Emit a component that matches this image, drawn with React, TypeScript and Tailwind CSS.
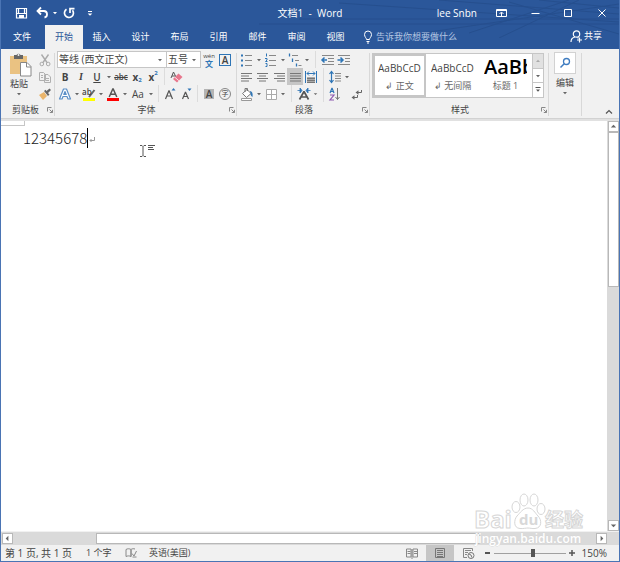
import React from 'react';

const UI_FONT = "font-['Open_Sans','Noto_Sans_CJK_SC',sans-serif]";

interface IconProps {
  children: React.ReactNode;
  className?: string;
}

const Icon: React.FC<IconProps> = ({ children, className = 'w-4 h-4' }) => (
  <svg viewBox="0 0 16 16" fill="none" className={`shrink-0 ${className}`} aria-hidden="true">
    {children}
  </svg>
);

const Tool: React.FC<{ label: string; active?: boolean; children: React.ReactNode }> = ({
  label,
  active,
  children
}) => (
  <button
    type="button"
    aria-label={label}
    className={`w-4 h-[17px] shrink-0 flex items-center justify-center text-[#444] ${active ? 'bg-[#c6c6c6]' : ''}`}
  >
    {children}
  </button>
);

const Caret = ({ className = 'w-2' }: { className?: string }) => (
  <svg viewBox="0 0 8 4" className={`h-1 shrink-0 ${className}`} aria-hidden="true">
    <path d="M2 1h4L4 3.2z" fill="#666" />
  </svg>
);

const Split = ({ className = 'w-[7px]' }: { className?: string }) => (
  <div className={`h-[17px] shrink-0 flex justify-center ${className}`}>
    <div className="w-px bg-[#dcdcdc]" />
  </div>
);

const Divider = () => <div className="w-px shrink-0 bg-[#d8d8d8] my-0.5" />;

const Launcher = ({ label }: { label: string }) => (
  <button type="button" aria-label={label} className="w-2 h-2 shrink-0">
    <svg viewBox="0 0 8 8" fill="none" className="w-2 h-2">
      <path d="M1.5 5.5v-4h4M3.5 3.5l3 3M6.5 3.8v2.7H3.8" stroke="#888" />
    </svg>
  </button>
);

const GroupLabel = ({ text }: { text: string }) => (
  <div className="h-4 flex items-center text-[9px] leading-4 text-[#444]">
    <span className="w-2 shrink-0" />
    <span className="flex-1 text-center">{text}</span>
    <Launcher label={text} />
  </div>
);

const Lines = ({ widths, x = [2, 2, 2, 2] }: { widths: number[]; x?: number[] }) => (
  <Icon>
    {widths.map((w, i) => (
      <path key={i} d={`M${x[i]} ${4.5 + i * 2.5}h${w}`} stroke="#777" />
    ))}
  </Icon>
);

const tabs = ['文件', '开始', '插入', '设计', '布局', '引用', '邮件', '审阅', '视图'];

const streaks = [
  'M100 3L380 22',
  'M60 19h320',
  'M150 38L380 4',
  'M200 0L380 14',
  'M20 24h360',
  'M260 38L340 0',
  'M230 33L330 0',
  'M270 2L380 34',
  'M300 0L380 8'
];

const TitleBar = () => (
  <div className="h-[25px] flex items-center text-white">
    <div className="flex-1 flex items-center">
      <button type="button" aria-label="保存" className="ml-3">
        <Icon>
          <path d="M3.5 3.5h10v9.5h-10zM3.5 8.5h10M5.5 3.5v4.5M11.5 3.5v4.5" stroke="#fff" strokeWidth="1.2" />
          <path d="M6 10h5v3H6z" fill="#fff" />
        </Icon>
      </button>
      <button type="button" aria-label="撤消" className="ml-[5px]">
        <Icon>
          <path d="M7 2.500L3.500 6 7 9.500M4 6h6a3.300 3.300 0 0 1 .5 6.500" stroke="#fff" strokeWidth="1.8" />
        </Icon>
      </button>
      <svg viewBox="0 0 8 4" className="w-2 h-1 ml-px">
        <path d="M2 1h4L4 3.2z" fill="#fff" />
      </svg>
      <button type="button" aria-label="重复" className="ml-0.5">
        <Icon>
          <path d="M5.500 4.200a4.500 4.500 0 1 0 6 1M9 8V3.700h4.500" stroke="#fff" strokeWidth="1.7" />
        </Icon>
      </button>
      <button type="button" aria-label="自定义快速访问工具栏" className="ml-[5px]">
        <Icon>
          <path d="M6 6.5h4" stroke="#fff" />
          <path d="M5.7 8.5h4.6L8 10.8z" fill="#fff" />
        </Icon>
      </button>
    </div>
    <h1 className="text-[10px] leading-4 whitespace-pre">文档1  -  Word</h1>
    <div className="flex-1 flex items-center justify-end">
      <span className="text-[10px] leading-4 mr-4">lee Snbn</span>
      <button type="button" aria-label="功能区显示选项" className="mr-[18px]">
        <Icon>
          <path d="M3.5 4.5h10v7h-10zM3.5 5.5h10" stroke="#fff" />
          <path d="M8.5 11V7.5M6.5 9l2-2 2 2" stroke="#fff" />
        </Icon>
      </button>
      <button type="button" aria-label="最小化" className="mr-[17px]">
        <Icon>
          <path d="M4.5 8.5h8" stroke="#fff" />
        </Icon>
      </button>
      <button type="button" aria-label="最大化" className="mr-[18px]">
        <Icon>
          <path d="M4.5 4.5h7v7h-7z" stroke="#fff" />
        </Icon>
      </button>
      <button type="button" aria-label="关闭" className="mr-[9px]">
        <Icon>
          <path d="M4.5 4.5l7 7M11.5 4.5l-7 7" stroke="#fff" />
        </Icon>
      </button>
    </div>
  </div>
);

const TabBar = () => (
  <nav className="h-6 flex text-[9px] leading-4 text-white">
    {tabs.map((tab, i) => (
      <button
        key={tab}
        type="button"
        className={`${i === 0 ? 'w-11 pr-0.5' : i === 1 ? 'w-[38px] bg-[#f1f1f1] text-[#2b579a]' : 'w-[39px] pr-0.5'}`}
      >
        {tab}
      </button>
    ))}
    <button type="button" className="flex items-center ml-1 text-[#b4c6e2]">
      <Icon>
        <path
          d="M6.500 10.500C6.500 9 4.500 8 4.500 5.500a3.500 3.500 0 0 1 7 0c0 2.500-2 3.500-2 5zM6.500 12.500h3M7 14h2"
          stroke="#fff"
        />
      </Icon>
      <span>告诉我你想要做什么</span>
    </button>
    <button type="button" className="flex items-center pb-0.5 ml-auto mr-[17px]">
      <Icon>
        <circle cx="8.500" cy="6" r="3.200" stroke="#fff" strokeWidth="1.200" />
        <path d="M3 14c0-2.500 1.500-4.500 4-5M9.500 9.500l1 .8M11.500 9.500v5M9 12h5" stroke="#fff" strokeWidth="1.200" />
      </Icon>
      <span>共享</span>
    </button>
  </nav>
);

const ClipboardGroup = () => (
  <section className="w-[53px] flex flex-col">
    <div className="h-[51px] flex">
      <button type="button" className="w-9 flex flex-col items-center text-[9px] leading-3 text-[#444]">
        <svg viewBox="0 0 24 26" className="w-6 h-[26px] mt-px ml-1" aria-hidden="true">
          <path d="M1 4h17v18H1z" fill="#eac282" />
          <path d="M5 3h2.500a2.200 2.200 0 0 1 4 0H14v4H5z" fill="#666" />
          <circle cx="9.500" cy="3" r="1" fill="#f1f1f1" />
          <path d="M11.500 10.500h6.500l4 4v9.500H11.500z" fill="#fff" stroke="#888" />
          <path d="M17.500 10.500v4.500H22" fill="none" stroke="#888" />
        </svg>
        <span>粘贴</span>
        <span className="mt-0.5 flex">
          <Caret />
        </span>
      </button>
      <div className="flex flex-col">
        <Tool label="剪切">
          <Icon>
            <path d="M4.500 2.500l5.500 8M11.500 2.500l-5.500 8" stroke="#aaa" strokeWidth="1.400" />
            <circle cx="4.800" cy="12" r="1.800" stroke="#aaa" />
            <circle cx="11.200" cy="12" r="1.800" stroke="#aaa" />
          </Icon>
        </Tool>
        <Tool label="复制">
          <Icon>
            <path d="M2.500 3.500h4l2 2v6h-6zM7.500 5.500h3.500l2.500 2.500v5.500h-6z" fill="#f1f1f1" stroke="#b0b0b0" />
            <path d="M4 6.500h2M4 8.500h2M9 9.500h3M9 11.500h3" stroke="#b0b0b0" />
          </Icon>
        </Tool>
        <Tool label="格式刷">
          <Icon>
            <path d="M2 9l5-3 3 4-4 4z" fill="#eab56c" />
            <path d="M7 5l4 5 1.500-1.500-1.500-1.500 3-3-1.500-1.500-3 2.500L8.500 3.800z" fill="#666" />
          </Icon>
        </Tool>
      </div>
    </div>
    <div className="-ml-2 pl-1">
      <GroupLabel text="剪贴板" />
    </div>
  </section>
);

const Combo: React.FC<{ label: string; value: string; className: string }> = ({ label, value, className }) => (
  <label className={`relative h-[17px] flex items-center bg-white border border-[#c6c6c6] ${className}`}>
    <select
      aria-label={label}
      className="w-full appearance-none bg-transparent pl-px text-[10px] leading-[15px] text-[#444] outline-none"
    >
      <option>{value}</option>
    </select>
    <span className="absolute right-0.5 top-1.5 flex">
      <Caret />
    </span>
  </label>
);

const FontGroup = () => (
  <section className="w-[181px] pl-0.5 flex flex-col">
    <div className="h-[17px] flex">
      <Combo label="字体" value="等线 (西文正文)" className="w-[110px]" />
      <Combo label="字号" value="五号" className="w-[34px] border-l-0" />
      <Tool label="拼音指南">
        <span className="flex flex-col items-center text-[6px] leading-[8px]">
          <span>wén</span>
          <span className="text-[8px] font-bold text-[#2e75b6]">文</span>
        </span>
      </Tool>
      <Tool label="字符边框">
        <span className="w-3 h-3 border border-[#2e75b6] text-[10px] leading-[10px] font-semibold">A</span>
      </Tool>
    </div>
    <div className="h-[17px] flex items-center text-[10px] leading-4">
      <Tool label="加粗">
        <b>B</b>
      </Tool>
      <Tool label="倾斜">
        <i className="font-['Liberation_Serif',serif] font-bold">I</i>
      </Tool>
      <Tool label="下划线">
        <span className="underline font-semibold">U</span>
      </Tool>
      <Caret />
      <Tool label="删除线">
        <span className="text-[8px] font-semibold line-through">abc</span>
      </Tool>
      <Tool label="下标">
        <span className="font-bold">x</span>
        <span className="text-[6px] leading-none self-end pb-0.5 font-bold text-[#2e75b6]">2</span>
      </Tool>
      <Tool label="上标">
        <span className="font-bold">x</span>
        <span className="text-[6px] leading-none self-start pt-0.5 font-bold text-[#2e75b6]">2</span>
      </Tool>
      <Split />
      <Tool label="清除所有格式">
        <Icon>
          <path d="M3 9l2.500-6L8 8M4 7h3" stroke="#555" />
          <path d="M10.500 4.500l4 3.500-5.500 5.500-4-3.500z" fill="#e8768c" />
          <path d="M6.800 8.200l4 3.500" stroke="#fff" strokeWidth=".8" />
        </Icon>
      </Tool>
    </div>
    <div className="h-[17px] flex items-center text-[10px] leading-4">
      <Tool label="文本效果">
        <Icon>
          <path
            d="M2.500 13L6.500 3h3l4 10H11L10 10.500H6L5 13zM6.800 8.500h2.400L8 5.500z"
            fill="#fff"
            stroke="#5b8fc7"
            strokeWidth="1.200"
            strokeLinejoin="round"
          />
        </Icon>
      </Tool>
      <Caret />
      <Tool label="突出显示">
        <Icon>
          <path d="M2 12h12v3H2z" fill="#ff0" />
          <path d="M8 11l5.500-7" stroke="#666" strokeWidth="2" />
          <text x="1" y="9" fontSize="8" fontWeight="600" fill="#444">
            ab
          </text>
        </Icon>
      </Tool>
      <Caret />
      <Tool label="字体颜色">
        <Icon>
          <path d="M2 12h12v3H2z" fill="#f00" />
          <path d="M4.200 11L8 2.500l3.800 8.500M5.500 8.200h5" stroke="#555" strokeWidth="1.500" strokeLinejoin="bevel" />
        </Icon>
      </Tool>
      <Caret />
      <button type="button" aria-label="更改大小写" className="w-[18px] text-[#444]">
        Aa
      </button>
      <Caret />
      <Split />
      <Tool label="增大字号">
        <Icon>
          <path d="M3.500 13L7 4.500l3.500 8.500M4.800 10h4.400" stroke="#555" strokeWidth="1.200" strokeLinejoin="bevel" />
          <path d="M9.500 4.500h4L11.500 2z" fill="#2e75b6" />
        </Icon>
      </Tool>
      <Tool label="减小字号">
        <Icon>
          <path d="M4.500 13l3-7 3 7M5.500 10.500h4" stroke="#555" strokeWidth="1.200" strokeLinejoin="bevel" />
          <path d="M9.500 2.500h4L11.500 5z" fill="#2e75b6" />
        </Icon>
      </Tool>
      <Split />
      <Tool label="字符底纹">
        <span className="w-2.5 h-2.5 bg-[#b4b4b4] leading-[10px] font-semibold">A</span>
      </Tool>
      <Tool label="带圈字符">
        <span className="w-3 h-3 rounded-full border border-[#888] text-[7px] leading-[10px]">字</span>
      </Tool>
    </div>
    <GroupLabel text="字体" />
  </section>
);

const ParagraphGroup = () => (
  <section className="w-[132px] pl-0.5 flex flex-col">
    <div className="h-[17px] flex items-center">
      <Tool label="项目符号">
        <Icon>
          <path d="M2 3.500h2M2 8.500h2M2 13.500h2" stroke="#2e75b6" strokeWidth="2" />
          <path d="M6 3.500h7M6 8.500h7M6 13.500h7" stroke="#888" />
        </Icon>
      </Tool>
      <Caret />
      <Tool label="编号">
        <Icon>
          <path d="M3.500 1.500v3M2 6.500h2v1.500l-1.500 1.500h2M2.500 11.500h1.500v3H2.500" stroke="#2e75b6" />
          <path d="M6 3.500h7M6 8.500h7M6 13.500h7" stroke="#888" />
        </Icon>
      </Tool>
      <Caret />
      <Tool label="多级列表">
        <Icon>
          <path d="M2.500 1.500v3M5.500 6.500v3.500M9.500 11.500v3" stroke="#2e75b6" strokeWidth="1.300" />
          <path d="M5 3.500h6M8 8.500h4M11.500 13.500h3" stroke="#888" />
        </Icon>
      </Tool>
      <Caret />
      <Split className="w-[9px]" />
      <Tool label="减少缩进量">
        <Icon>
          <path d="M2 3.500h12M8 6.500h6M8 9.500h6M2 12.500h12" stroke="#888" />
          <path d="M1.500 8h5.500M4.500 5.500L2 8l2.500 2.500" stroke="#2e75b6" strokeWidth="1.500" />
        </Icon>
      </Tool>
      <Tool label="增加缩进量">
        <Icon>
          <path d="M2 3.500h12M9 6.500h5M9 9.500h5M2 12.500h12" stroke="#888" />
          <path d="M1.500 8H7M4.500 5.500L7 8l-2.500 2.500" stroke="#2e75b6" strokeWidth="1.500" />
        </Icon>
      </Tool>
    </div>
    <div className="h-[17px] flex items-center">
      <Tool label="左对齐">
        <Lines widths={[11, 8, 11, 8]} />
      </Tool>
      <Tool label="居中">
        <Lines widths={[11, 7, 11, 7]} x={[2, 4, 2, 4]} />
      </Tool>
      <Tool label="右对齐">
        <Lines widths={[11, 8, 11, 8]} x={[3, 6, 3, 6]} />
      </Tool>
      <Tool label="两端对齐" active>
        <Lines widths={[11, 11, 11, 11]} x={[3, 3, 3, 3]} />
      </Tool>
      <Tool label="分散对齐">
        <Icon>
          <path d="M2.500 2v12M13.500 2v12M4 4.500h8M6 2.500l-2 2 2 2M10 2.500l2 2-2 2" stroke="#2e75b6" />
          <path d="M4 8h8v6H4z" fill="#aaa" />
          <path d="M4 9.500h8M4 11.500h8M4 13.500h8" stroke="#777" />
        </Icon>
      </Tool>
      <Split className="w-2" />
      <Tool label="行距">
        <Icon>
          <path d="M4.500 2.500v11M2.500 5l2-2.500 2 2.500M2.500 11l2 2.500 2-2.500" stroke="#2e75b6" strokeWidth="1.200" />
          <path d="M8 4.500h6M8 7h6M8 9.500h6M8 12h6" stroke="#888" />
        </Icon>
      </Tool>
      <Caret />
    </div>
    <div className="h-[17px] flex items-center">
      <Tool label="底纹">
        <Icon>
          <path d="M3.500 7.500L8 3.500l4 4-4.500 4z" fill="#fff" stroke="#777" />
          <path d="M6 6V2.500h2.500V5" stroke="#777" />
          <path d="M11 5c2.500.5 3 3 2.500 6-1.500-1-2-2-2-3.500z" fill="#2e75b6" />
          <path d="M2.500 12.500h10v2h-10z" fill="#fff" stroke="#999" />
        </Icon>
      </Tool>
      <Caret />
      <Tool label="边框">
        <Icon>
          <path d="M3.500 3.500h10v10h-10z" fill="#fff" stroke="#aaa" />
          <path d="M8.500 3.500v10M3.500 8.500h10" stroke="#aaa" />
        </Icon>
      </Tool>
      <Caret />
      <Split className="w-[9px]" />
      <Tool label="中文版式">
        <Icon>
          <path d="M3.500 13.500L8 5.500l4.500 8M5 11h6" stroke="#555" strokeWidth="1.700" strokeLinejoin="bevel" />
          <path d="M1.500 4.500H5M4 2l2 2.500L4 7zM14.500 4.500H11M12 2l-2 2.500L12 7z" fill="#2e75b6" stroke="#2e75b6" strokeWidth=".8" />
        </Icon>
      </Tool>
      <Caret className="w-[7px]" />
      <Split className="w-2" />
      <Tool label="排序">
        <Icon>
          <path d="M3 7l2-5 2 5M3.500 5.500h3" stroke="#2e75b6" strokeWidth="1.200" strokeLinejoin="bevel" />
          <path d="M3 9h4l-4 5h4" stroke="#8e5bb0" strokeWidth="1.200" />
          <path d="M10.500 2v11.500M8.500 11l2 2.500 2-2.500" stroke="#777" />
        </Icon>
      </Tool>
      <span className="w-1.5" />
      <Tool label="显示编辑标记">
        <Icon>
          <path d="M12.500 4v2.500H9M8.500 9v2.500H5" stroke="#666" />
          <path d="M9.500 4.200v4.600L6.500 6.500zM5.500 9.200v4.600L2.500 11.500z" fill="#666" />
        </Icon>
      </Tool>
    </div>
    <GroupLabel text="段落" />
  </section>
);

const styleItem = 'flex flex-col justify-start text-center';
const styleSample = 'w-full h-[22px] pt-1 text-left whitespace-nowrap overflow-hidden';
const styleName = 'w-full text-[9px] text-[#666]';

const StylesGroup = () => (
  <section className="w-[178px] pl-0.5 flex flex-col">
    <div className="h-[51px] pt-0.5 pr-1">
      <div className="h-[45px] flex bg-white border border-[#c6c6c6] text-[10px] leading-4 text-[#444]">
        <button type="button" className={`${styleItem} w-[53px] border-2 border-[#c6c6c6] px-[3px]`}>
          <span className={styleSample}>AaBbCcDd</span>
          <span className={styleName}>↲ 正文</span>
        </button>
        <button type="button" className={`${styleItem} w-[53px] px-[5px] py-0.5`}>
          <span className={styleSample}>AaBbCcDd</span>
          <span className={styleName}>↲ 无间隔</span>
        </button>
        <button type="button" className={`${styleItem} flex-1 min-w-0 px-[5px] py-0.5`}>
          <span className="w-full h-[22px] text-left whitespace-nowrap overflow-hidden text-[20px] leading-[22px] font-semibold text-black">
            AaBb
          </span>
          <span className={styleName}>标题 1</span>
        </button>
        <div className="w-[11px] flex flex-col border-l border-[#c6c6c6]">
          <button type="button" aria-label="上一行" className="flex-1 bg-[#e1e1e1] flex items-center justify-center">
            <svg viewBox="0 0 8 4" className="w-2 h-1">
              <path d="M2 3h4L4 .8z" fill="#aaa" />
            </svg>
          </button>
          <button type="button" aria-label="下一行" className="flex-1 border-y border-[#c6c6c6] flex items-center justify-center">
            <Caret />
          </button>
          <button type="button" aria-label="其他" className="flex-1 flex items-center justify-center">
            <svg viewBox="0 0 8 6" className="w-2 h-1.5">
              <path d="M1.500 .5h5" stroke="#555" />
              <path d="M2 2.500h4L4 4.800z" fill="#555" />
            </svg>
          </button>
        </div>
      </div>
    </div>
    <GroupLabel text="样式" />
  </section>
);

const Ribbon = () => (
  <div className="h-[69px] pt-0.5 flex bg-[#f1f1f1]">
    <ClipboardGroup />
    <Divider />
    <FontGroup />
    <Divider />
    <ParagraphGroup />
    <Divider />
    <StylesGroup />
    <Divider />
    <button type="button" className="w-8 flex flex-col items-center text-[9px] leading-4 text-[#444]">
      <span className="w-[22px] h-[22px] mt-px flex items-center justify-center bg-white border border-[#d2d2d2]">
        <Icon>
          <circle cx="9.500" cy="6.500" r="3" stroke="#3f7cc0" strokeWidth="1.300" />
          <path d="M7.200 8.800L3.500 12.500" stroke="#3f7cc0" strokeWidth="1.500" />
        </Icon>
      </span>
      <span className="mt-px">编辑</span>
      <Caret />
    </button>
    <Divider />
    <button type="button" aria-label="折叠功能区" className="ml-auto mr-1 self-end">
      <Icon className="w-3 h-3">
        <path d="M4 10l4-4 4 4" stroke="#555" strokeWidth="1.600" />
      </Icon>
    </button>
  </div>
);

const arrows = {
  up: 'M2 6h6L5 3z',
  down: 'M2 4h6L5 7z',
  left: 'M6 2v6L3 5z',
  right: 'M4 2v6l3-3z'
};

const ScrollButton = ({ dir }: { dir: keyof typeof arrows }) => (
  <button
    type="button"
    aria-label={dir}
    className="w-[11px] h-[11px] shrink-0 bg-white border border-[#b8b8b8] flex items-center justify-center"
  >
    <svg viewBox="0 0 10 10" className="w-[9px] h-[9px] shrink-0">
      <path d={arrows[dir]} fill="#666" />
    </svg>
  </button>
);

const DocumentArea = () => (
  <main className="flex-1 flex flex-col">
    <div className="flex-1 flex">
      <div className="flex-1 bg-white">
        <div className="w-6 h-[5px] border-b border-r border-[#c6c6c6]" />
        <div className="flex">
          <p className="ml-[22px] h-[23px] flex items-center text-[15px] leading-[23px] text-[#222] font-light font-['Noto_Sans_CJK_SC',sans-serif]">
            <span>12345678</span>
            <span className="w-px h-5 bg-black" />
            <svg viewBox="0 0 8 8" fill="none" className="w-2 h-2 mt-1">
              <path d="M6.500 1v3.500H2M3.500 3L2 4.500 3.500 6" stroke="#999" />
            </svg>
          </p>
          <svg viewBox="0 0 18 14" fill="none" className="w-[18px] h-3.5 mt-[18px] ml-[43px]">
            <path d="M1 1.500h2l1 1 1-1h2M4 2.500v9M1 12.500h2l1-1 1 1h2" stroke="#555" />
            <path d="M9 1.500h7M9 3.500h5M9 5.500h6" stroke="#555" />
          </svg>
        </div>
      </div>
      <div className="w-3 flex flex-col items-center bg-[#dadada]">
        <ScrollButton dir="up" />
        <div className="w-[11px] h-[155px] bg-white border border-[#b8b8b8]" />
        <div className="mt-auto">
          <ScrollButton dir="down" />
        </div>
      </div>
    </div>
    <div className="h-[13px] mt-px flex items-center bg-[#dadada] pl-px">
      <ScrollButton dir="left" />
      <div className="flex-1 flex">
        <div className="w-[83px]" />
        <div className="flex-1 h-[11px] bg-white border border-[#b8b8b8]" />
        <div className="w-[116px]" />
      </div>
      <ScrollButton dir="right" />
      <div className="w-3" />
    </div>
  </main>
);

const StatusBar = () => (
  <footer className="h-4 flex items-center bg-[#f1f1f1] text-[9px] leading-4 text-[#444]">
    <span className="ml-1 w-[81px] whitespace-nowrap text-[10px]">第 1 页, 共 1 页</span>
    <span className="w-[37px]">1 个字</span>
    <Icon>
      <path d="M8 4.500c-1.500-1-3.500-1-5 0v7c1.500-.8 3.500-.8 5 0zM8 4.500c1-.8 2.500-1 4-.5M8 11.500V5" stroke="#888" />
      <path d="M9 8.500l2 2.500 2.500-5M9.500 12h4" stroke="#888" />
    </Icon>
    <span className="ml-2.5">英语(美国)</span>
    <div className="ml-auto flex items-center h-4">
      <button type="button" aria-label="阅读视图" className="w-7 h-4 flex justify-center">
        <Icon>
          <path d="M2.500 4h4.500v8H2.500zM9 4h4.500v8H9zM8 4v10" stroke="#888" />
          <path d="M3.500 6.500h3M3.500 8.500h3M10 6.500h3M10 8.500h3" stroke="#888" />
        </Icon>
      </button>
      <button type="button" aria-label="页面视图" className="w-7 h-4 flex justify-center bg-[#c6c6c6]">
        <Icon>
          <path d="M3.500 3.500h9v9h-9z" stroke="#777" />
          <path d="M5 5.500h6M5 7.500h6M5 9.500h6M5 11.500h6" stroke="#777" />
        </Icon>
      </button>
      <button type="button" aria-label="Web 版式视图" className="w-7 h-4 flex justify-center">
        <Icon>
          <path d="M12.500 6V3.500h-9v9H7M5 5.500h6M5 7.500h3M5 9.500h2" stroke="#888" />
          <circle cx="11" cy="10.500" r="3" stroke="#777" />
          <path d="M9 9l2 1 1 2.500" stroke="#777" />
        </Icon>
      </button>
      <button type="button" aria-label="缩小" className="w-3 h-4 flex items-center justify-center">
        <span className="w-[5px] h-0.5 bg-[#555]" />
      </button>
      <input
        type="range"
        aria-label="显示比例"
        min={10}
        max={190}
        defaultValue={108}
        className="w-[72px] h-4 appearance-none bg-transparent [&::-webkit-slider-runnable-track]:h-px [&::-webkit-slider-runnable-track]:bg-[#a0a0a0] [&::-webkit-slider-thumb]:appearance-none [&::-webkit-slider-thumb]:w-1 [&::-webkit-slider-thumb]:h-2 [&::-webkit-slider-thumb]:-mt-1 [&::-webkit-slider-thumb]:bg-[#555]"
      />
      <button type="button" aria-label="放大" className="w-3 h-4 flex items-center justify-center">
        <svg viewBox="0 0 6 6" className="w-1.5 h-1.5">
          <path d="M3 0v6M0 3h6" stroke="#555" strokeWidth="1.500" />
        </svg>
      </button>
      <span className="ml-1 mr-3 text-[10px]">150%</span>
    </div>
  </footer>
);

const Watermark = () => (
  <svg
    viewBox="0 0 116 56"
    className="absolute right-[30px] bottom-3 w-[116px] h-14 pointer-events-none font-['Open_Sans','Noto_Sans_CJK_SC',sans-serif]"
    fill="#fff"
    stroke="#d6d6d6"
    aria-hidden="true"
  >
    <text x="1" y="35" fontSize="24" fontWeight="700">
      Bai
    </text>
    <ellipse cx="43" cy="14" rx="4" ry="5.500" />
    <ellipse cx="51" cy="7" rx="4" ry="6" />
    <ellipse cx="61" cy="7" rx="4" ry="6" />
    <ellipse cx="68" cy="16" rx="4" ry="5.500" />
    <path d="M55 15c5 0 7 5 10 8 4 4 4 12-3 12.500-3 .3-5-.5-7-.5s-5 .8-8 .5c-7-.5-6-9-3-12.500 3-3 6-8 11-8z" />
    <text x="46" y="32" fontSize="15" fontWeight="700" fill="#d8d8d8" stroke="none">
      du
    </text>
    <text x="72" y="34" fontSize="19" fontWeight="700">
      经验
    </text>
    <text x="2" y="50" fontSize="12" fontWeight="600" strokeWidth=".8" paintOrder="stroke">
      jingyan.baidu.com
    </text>
  </svg>
);

export default function App() {
  return (
    <div className={`relative min-h-screen flex flex-col border border-t-0 border-[#4a74b4] bg-[#f1f1f1] ${UI_FONT}`}>
      <header className="relative bg-[#2b579a]">
        <svg
          viewBox="0 0 380 38"
          className="absolute right-0 top-0 w-[380px] h-[38px] pointer-events-none"
          stroke="#264f8e"
          strokeWidth="1"
          aria-hidden="true"
        >
          {streaks.map((d) => (
            <path key={d} d={d} />
          ))}
        </svg>
        <div className="relative">
          <TitleBar />
          <TabBar />
        </div>
      </header>
      <Ribbon />
      <div className="h-[3px] bg-[#e1e1e1] border-t border-[#d2d2d2]" />
      <DocumentArea />
      <StatusBar />
      <Watermark />
    </div>
  );
}
